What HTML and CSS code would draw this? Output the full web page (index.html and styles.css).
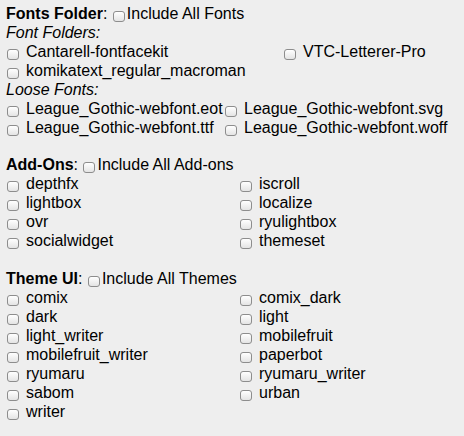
FILE: index.html
```html
<!DOCTYPE html>
<html lang="en">
<head>
<meta charset="utf-8">
<title>Build Options</title>
<link rel="stylesheet" href="styles.css">
</head>
<body>
<div class="page">
  <section class="sect sect-fonts">
    <div class="head"><b>Fonts Folder</b>: <input type="checkbox" class="cb cb-head">Include All Fonts</div>
    <div class="sub">Font Folders:</div>
    <div class="grid grid-folders">
      <label class="item"><input type="checkbox" class="cb">Cantarell-fontfacekit</label>
      <label class="item"><input type="checkbox" class="cb">VTC-Letterer-Pro</label>
      <label class="item"><input type="checkbox" class="cb">komikatext_regular_macroman</label>
    </div>
    <div class="sub">Loose Fonts:</div>
    <div class="grid grid-loose">
      <label class="item"><input type="checkbox" class="cb">League_Gothic-webfont.eot</label>
      <label class="item"><input type="checkbox" class="cb">League_Gothic-webfont.svg</label>
      <label class="item"><input type="checkbox" class="cb">League_Gothic-webfont.ttf</label>
      <label class="item"><input type="checkbox" class="cb">League_Gothic-webfont.woff</label>
    </div>
  </section>
  <section class="sect sect-addons">
    <div class="head"><b>Add-Ons</b>: <input type="checkbox" class="cb cb-head">Include All Add-ons</div>
    <div class="grid grid-half">
      <label class="item"><input type="checkbox" class="cb">depthfx</label>
      <label class="item"><input type="checkbox" class="cb">iscroll</label>
      <label class="item"><input type="checkbox" class="cb">lightbox</label>
      <label class="item"><input type="checkbox" class="cb">localize</label>
      <label class="item"><input type="checkbox" class="cb">ovr</label>
      <label class="item"><input type="checkbox" class="cb">ryulightbox</label>
      <label class="item"><input type="checkbox" class="cb">socialwidget</label>
      <label class="item"><input type="checkbox" class="cb">themeset</label>
    </div>
  </section>
  <section class="sect sect-themes">
    <div class="head"><b>Theme UI</b>: <input type="checkbox" class="cb cb-head">Include All Themes</div>
    <div class="grid grid-half">
      <label class="item"><input type="checkbox" class="cb">comix</label>
      <label class="item"><input type="checkbox" class="cb">comix_dark</label>
      <label class="item"><input type="checkbox" class="cb">dark</label>
      <label class="item"><input type="checkbox" class="cb">light</label>
      <label class="item"><input type="checkbox" class="cb">light_writer</label>
      <label class="item"><input type="checkbox" class="cb">mobilefruit</label>
      <label class="item"><input type="checkbox" class="cb">mobilefruit_writer</label>
      <label class="item"><input type="checkbox" class="cb">paperbot</label>
      <label class="item"><input type="checkbox" class="cb">ryumaru</label>
      <label class="item"><input type="checkbox" class="cb">ryumaru_writer</label>
      <label class="item"><input type="checkbox" class="cb">sabom</label>
      <label class="item"><input type="checkbox" class="cb">urban</label>
      <label class="item"><input type="checkbox" class="cb">writer</label>
    </div>
  </section>
</div>
</body>
</html>
```
FILE: styles.css
```css
html, body {
  margin: 0;
  padding: 0;
  background: #eeeeee;
}

body {
  font-family: "Liberation Sans", Arial, sans-serif;
  font-size: 16px;
  line-height: 19px;
  color: #000;
}

.page {
  padding: 4px 6px 0 6px;
}

.sect-addons {
  margin-top: 18px;
}

.sect-themes {
  margin-top: 19px;
}

.head {
  white-space: nowrap;
}

.head b {
  font-weight: bold;
}

.sub {
  font-style: italic;
}

.grid {
  display: grid;
}

.grid-folders {
  grid-template-columns: 277px 1fr;
}

.grid-loose {
  grid-template-columns: 218px 1fr;
}

.grid-half {
  grid-template-columns: 233px 1fr;
}

.item {
  display: flex;
  align-items: flex-start;
  white-space: nowrap;
  height: 19px;
}

.cb {
  -webkit-appearance: none;
  appearance: none;
  box-sizing: border-box;
  width: 12px;
  height: 11px;
  margin: 7px 7px 0 1px;
  padding: 0;
  border: 1px solid #8d8d8d;
  border-radius: 3px;
  background: linear-gradient(#ffffff, #e4e4e4);
  flex: none;
}

.cb-head {
  display: inline-block;
  margin: 0 2px 0 1px;
  vertical-align: -3px;
}
```
